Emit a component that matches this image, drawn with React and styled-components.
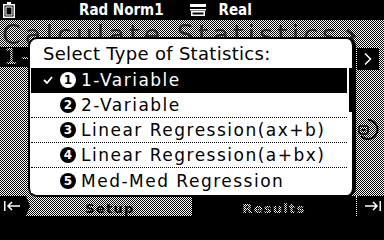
import React from 'react';
import styled, { createGlobalStyle } from 'styled-components';

const Global = createGlobalStyle`
  html, body { margin: 0; padding: 0; background: #000; }
  body { width: 384px; height: 216px; overflow: hidden; }
  * { box-sizing: border-box; }
`;

const Screen = styled.div`
  position: relative;
  width: 384px;
  height: 216px;
  overflow: hidden;
  background: #fff;
  display: flex;
  flex-direction: column;
  font-family: "DejaVu Sans", sans-serif;
`;

const StatusBar = styled.div`
  position: relative;
  z-index: 3;
  flex: none;
  height: 20px;
  background: #000;
  color: #fff;
  display: flex;
  align-items: center;
  font-family: "Liberation Sans Narrow", "DejaVu Sans Condensed", Roboto, sans-serif;
  font-weight: 700;
  font-size: 15px;
`;

const Slot = styled.div`
  display: flex;
  align-items: center;
  margin-left: ${(p) => p.$ml}px;
  line-height: 20px;
  white-space: nowrap;
`;

const Desk = styled.div`
  flex: 1;
  display: flex;
  flex-direction: column;
`;

const TitleRow = styled.div`
  height: 27px;
  flex: none;
  display: flex;
  align-items: flex-start;
  padding: 3px 0 0 2px;
  color: #2448b8;
`;

const TitleText = styled.div`
  font-size: 27px;
  line-height: 24px;
  letter-spacing: 4px;
  white-space: nowrap;
`;

const TitleChevron = styled.svg`
  margin: 6px 0 0 4px;
  flex: none;
`;

const Middle = styled.div`
  flex: 1;
  display: flex;
`;

const LeftCol = styled.div`
  flex: 1;
  display: flex;
  flex-direction: column;
`;

const ListLabel = styled.div`
  width: 340px;
  height: 20px;
  background: #000;
  color: #fff;
  font-size: 22px;
  line-height: 20px;
  padding-left: 4px;
  letter-spacing: 3px;
  white-space: nowrap;
`;

const RightCol = styled.div`
  width: 28px;
  flex: none;
  display: flex;
  flex-direction: column;
  padding-left: 1px;
`;

const NextBox = styled.div`
  position: relative;
  z-index: 2;
  margin-top: 1px;
  width: 22px;
  height: 22px;
  background: #000;
  display: grid;
  place-items: center;
`;

const RoundIcon = styled.svg`
  margin-top: 48px;
`;

const BottomBar = styled.div`
  height: 20px;
  flex: none;
  display: flex;
  background: #fff;
`;

const EdgeButton = styled.div`
  position: relative;
  z-index: 2;
  flex: none;
  width: ${(p) => (p.$side === 'left' ? 30 : 28)}px;
  height: 20px;
  background: #000;
  display: flex;
  align-items: center;
  padding-left: ${(p) => (p.$side === 'left' ? 4 : 8)}px;
  ${(p) =>
    p.$side === 'left'
      ? 'clip-path: polygon(0 0, 26px 0, 30px 50%, 26px 100%, 0 100%); margin-right: -2px;'
      : 'border-left: 1px dotted #fff;'}
`;

const Tab = styled.div`
  flex: 1;
  display: flex;
  justify-content: center;
  align-items: center;
  background: ${(p) => (p.$active ? '#fff' : '#000')};
  color: ${(p) => (p.$active ? '#000' : '#fff')};
  font-size: 13px;
  font-weight: 700;
  letter-spacing: 1.3px;
  padding-top: 4px;
`;

const Checker = styled.svg`
  position: absolute;
  left: 0;
  top: 20px;
  z-index: 1;
  pointer-events: none;
  display: block;
`;

const Dialog = styled.div`
  position: absolute;
  z-index: 4;
  top: 37px;
  left: 28px;
  width: 328px;
  height: 160px;
  background: #fff;
  border: 2px solid #000;
  border-right-width: 4px;
  border-radius: 9px;
  display: flex;
  flex-direction: column;
  color: #000;
`;

const DialogTitle = styled.div`
  padding: 5px 0 0 13px;
  margin-bottom: 4px;
  font-size: 18px;
  line-height: 20px;
  letter-spacing: 0.3px;
  white-space: nowrap;
`;

const ListArea = styled.div`
  display: flex;
  align-items: flex-start;
  gap: 2px;
  padding-left: 1px;
`;

const List = styled.div`
  width: 316px;
  display: flex;
  flex-direction: column;
`;

const Row = styled.div`
  height: 25px;
  display: flex;
  align-items: center;
  padding-left: 12px;
  border-bottom: 1px dotted #000;
  background: ${(p) => (p.$selected ? '#000' : '#fff')};
  color: ${(p) => (p.$selected ? '#fff' : '#000')};
  &:last-child { border-bottom: none; }
`;

const CheckSlot = styled.div`
  width: 17px;
  flex: none;
  display: flex;
  align-items: center;
`;

const Badge = styled.div`
  width: 16px;
  height: 16px;
  flex: none;
  border-radius: 50%;
  margin-right: 5px;
  background: ${(p) => (p.$selected ? '#fff' : '#000')};
  color: ${(p) => (p.$selected ? '#000' : '#fff')};
  font-size: 12px;
  font-weight: 700;
  line-height: 16px;
  text-align: center;
`;

const Label = styled.div`
  font-size: 17px;
  letter-spacing: 1.5px;
  white-space: nowrap;
  line-height: 20px;
`;

const Thumb = styled.div`
  width: 3px;
  height: 44px;
  background: #000;
  flex: none;
`;

const items = [
  '1-Variable',
  '2-Variable',
  'Linear Regression(ax+b)',
  'Linear Regression(a+bx)',
  'Med-Med Regression',
];

export default function App() {
  return (
    <>
      <Global />
      <Screen>
        <StatusBar>
          <Slot $ml={3}>
            <svg width="12" height="16" viewBox="0 0 12 16">
              <rect x="4" y="0" width="4" height="2" fill="#fff" />
              <rect x="0.75" y="2.75" width="10.5" height="12.5" fill="none" stroke="#fff" strokeWidth="1.5" />
              <rect x="3" y="5" width="6" height="8" fill="none" stroke="#fff" strokeWidth="1" />
            </svg>
          </Slot>
          <Slot $ml={64}>Rad Norm1</Slot>
          <Slot $ml={26}>
            <svg width="16" height="12" viewBox="0 0 16 12">
              <rect x="0" y="0" width="16" height="3" fill="#fff" />
              <rect x="0" y="5" width="16" height="1.5" fill="#fff" />
              <rect x="1.75" y="7.75" width="12.5" height="3.5" fill="none" stroke="#fff" strokeWidth="1.5" />
            </svg>
          </Slot>
          <Slot $ml={13}>Real</Slot>
        </StatusBar>
        <Desk>
          <TitleRow>
            <TitleText>Calculate Statistics</TitleText>
            <TitleChevron width="14" height="14" viewBox="0 0 14 14">
              <path d="M3 1 L10 7 L3 13" fill="none" stroke="#2448b8" strokeWidth="3" />
            </TitleChevron>
          </TitleRow>
          <Middle>
            <LeftCol>
              <ListLabel>1-Variable</ListLabel>
            </LeftCol>
            <RightCol>
              <NextBox>
                <svg width="8" height="12" viewBox="0 0 8 12">
                  <path d="M1 0.5 L6.5 6 L1 11.5" fill="none" stroke="#fff" strokeWidth="1.5" />
                </svg>
              </NextBox>
              <RoundIcon width="22" height="23" viewBox="0 0 22 23">
                <path d="M11 2 A9.5 9.5 0 1 1 4 18" fill="none" stroke="#000" strokeWidth="2" />
                <rect x="2" y="8" width="9" height="8" rx="2" fill="#fff" stroke="#000" strokeWidth="1.5" />
                <rect x="4.5" y="11" width="4" height="2" fill="#000" />
              </RoundIcon>
            </RightCol>
          </Middle>
          <BottomBar>
            <EdgeButton $side="left">
              <svg width="16" height="10" viewBox="0 0 16 10">
                <rect x="0" y="0" width="1.5" height="10" fill="#fff" />
                <path d="M4 5 H16 M8 1 L4 5 L8 9" fill="none" stroke="#fff" strokeWidth="1.5" />
              </svg>
            </EdgeButton>
            <Tab $active>Setup</Tab>
            <Tab>Results</Tab>
            <EdgeButton $side="right">
              <svg width="16" height="10" viewBox="0 0 16 10">
                <path d="M0 5 H12 M8 1 L12 5 L8 9" fill="none" stroke="#fff" strokeWidth="1.5" />
                <rect x="14.5" y="0" width="1.5" height="10" fill="#fff" />
              </svg>
            </EdgeButton>
          </BottomBar>
        </Desk>
        <Checker width="384" height="196" viewBox="0 0 384 196" shapeRendering="crispEdges">
          <defs>
            <pattern id="dither" width="2" height="2" patternUnits="userSpaceOnUse">
              <rect x="0" y="0" width="1" height="1" fill="#000" />
              <rect x="1" y="1" width="1" height="1" fill="#000" />
            </pattern>
          </defs>
          <rect x="0" y="0" width="384" height="196" fill="url(#dither)" />
        </Checker>
        <Dialog>
          <DialogTitle>Select Type of Statistics:</DialogTitle>
          <ListArea>
            <List>
              {items.map((t, i) => (
                <Row key={t} $selected={i === 0}>
                  <CheckSlot>
                    {i === 0 && (
                      <svg width="10" height="8" viewBox="0 0 10 8">
                        <path d="M1 4 L4 7 L9 1" fill="none" stroke="#fff" strokeWidth="1.8" />
                      </svg>
                    )}
                  </CheckSlot>
                  <Badge $selected={i === 0}>{i + 1}</Badge>
                  <Label>{t}</Label>
                </Row>
              ))}
            </List>
            <Thumb />
          </ListArea>
        </Dialog>
      </Screen>
    </>
  );
}
